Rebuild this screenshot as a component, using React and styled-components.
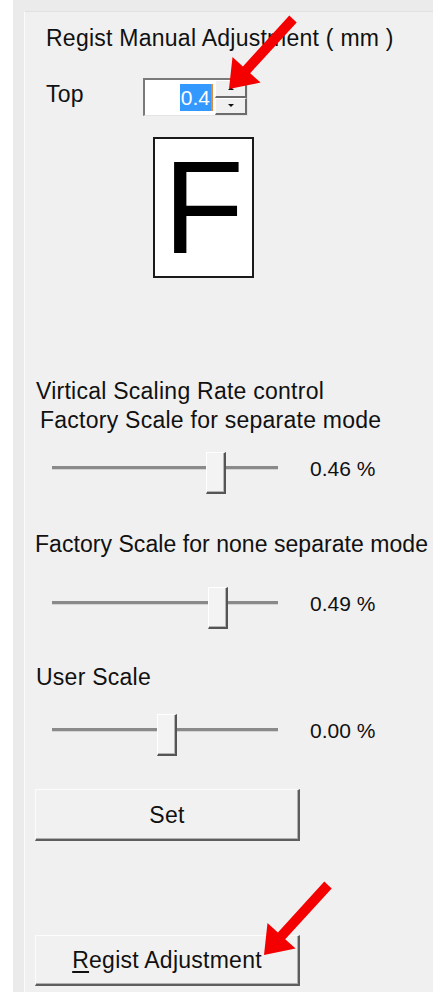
import React from "react";
import styled, { createGlobalStyle } from "styled-components";

const GlobalStyle = createGlobalStyle`
	html, body {
		margin: 0;
		padding: 0;
		background: #fff;
	}
	body {
		font-family: "Liberation Sans", Arial, sans-serif;
		color: #111;
	}
`;

const Page = styled.div`
	position: relative;
	display: flex;
	width: 433px;
	height: 992px;
	overflow: hidden;
	background: #fff;
`;

const Panel = styled.div`
	flex: 1;
	margin-left: 13px;
	padding: 11px 0 0 11px;
	background: #ebebeb;
	display: flex;
`;

const Frame = styled.div`
	flex: 1;
	display: flex;
	flex-direction: column;
	align-items: flex-start;
	background: #f0f0f0;
	border-left: 1px solid #fbfbfb;
	border-top: 1px solid #e1e1e1;
	padding: 13px 0 0 11px;
`;

const Label = styled.div`
	font-size: 23px;
	line-height: 26px;
	letter-spacing: ${p => (p.$spacing ?? 0.25)}px;
	white-space: nowrap;
	margin-top: ${p => p.$top || 0}px;
	margin-left: ${p => p.$left || 0}px;
`;

const TopRow = styled.div`
	display: flex;
	align-items: flex-start;
	margin: 27px 0 0 10px;
`;

const TopLabel = styled(Label)`
	width: 97px;
	margin-top: 3px;
`;

const Spin = styled.div`
	display: flex;
	height: 38px;
	border-top: 2px solid #7a7a7a;
	border-left: 2px solid #7a7a7a;
	border-bottom: 1px solid #e4e4e4;
	border-right: 1px solid #e4e4e4;
	box-sizing: border-box;
	background: #fff;
`;

const SpinInput = styled.div`
	width: 70px;
	display: flex;
	align-items: center;
	justify-content: flex-end;
	padding-right: 2px;
	box-sizing: border-box;
`;

const Selected = styled.span`
	background: #3399ff;
	color: #fff;
	font-size: 21px;
	line-height: 27px;
	padding: 0 1px;
	border-right: 2px solid #e08a3c;
`;

const SpinButtons = styled.div`
	display: flex;
	flex-direction: column;
	width: 32px;
`;

const SpinButton = styled.div`
	flex: 1;
	display: flex;
	align-items: center;
	justify-content: center;
	background: #f0f0f0;
	border-top: 1px solid #fff;
	border-left: 1px solid #fff;
	border-right: 2px solid #6c6c6c;
	border-bottom: 2px solid #6c6c6c;
	box-sizing: border-box;
	&::after {
		content: "";
		border-left: 3px solid transparent;
		border-right: 3px solid transparent;
		border-${p => (p.$up ? "bottom" : "top")}: 3px solid #111;
	}
`;

const LetterBox = styled.div`
	width: 101px;
	height: 141px;
	margin: 21px 0 0 117px;
	box-sizing: border-box;
	border: 2px solid #1a1a1a;
	background: #fff;
	display: flex;
	align-items: center;
	justify-content: center;
	font-size: 132px;
	line-height: 1;
	color: #000;
`;

const SliderRow = styled.div`
	display: flex;
	align-items: flex-start;
	height: 44px;
	margin-top: ${p => p.$top}px;
	margin-left: 16px;
`;

const Track = styled.div`
	position: relative;
	width: 226px;
	height: 44px;
	&::before {
		content: "";
		position: absolute;
		left: 0;
		right: 0;
		top: 14px;
		height: 3px;
		background: #8a8a8a;
		border-bottom: 1px solid #d4d4d4;
	}
`;

const Thumb = styled.div`
	position: absolute;
	top: 0;
	left: ${p => p.$left}px;
	width: 20px;
	height: 42px;
	box-sizing: border-box;
	background: #f3f3f3;
	border-top: 1px solid #fff;
	border-left: 1px solid #fff;
	border-right: 2px solid #555;
	border-bottom: 2px solid #555;
	box-shadow: inset -1px -1px 0 #b5b5b5;
`;

const Value = styled.div`
	margin: 4px 0 0 32px;
	font-size: 21px;
	line-height: 26px;
	white-space: nowrap;
`;

const Button = styled.div`
	width: 265px;
	height: ${p => p.$height}px;
	margin-top: ${p => p.$top}px;
	margin-left: -1px;
	box-sizing: border-box;
	display: flex;
	align-items: center;
	justify-content: center;
	background: #f1f1f1;
	border-top: 1px solid #fcfcfc;
	border-left: 1px solid #fcfcfc;
	border-right: 2px solid #5e5e5e;
	border-bottom: 2px solid #5e5e5e;
	box-shadow: inset -1px -1px 0 #b0b0b0;
	font-size: 23px;
	line-height: 26px;
	letter-spacing: 0.25px;
	white-space: nowrap;
	u {
		text-decoration-thickness: 2px;
		text-underline-offset: 3px;
	}
`;

const Overlay = styled.svg`
	position: absolute;
	left: 0;
	top: 0;
	pointer-events: none;
`;

const arrowPoints = (tx, ty, hx, hy, shaft = 5, headLen = 26, headHalf = 19) => {
	const dx = hx - tx;
	const dy = hy - ty;
	const len = Math.hypot(dx, dy);
	const ux = dx / len;
	const uy = dy / len;
	const nx = -uy;
	const ny = ux;
	const bx = hx - ux * headLen;
	const by = hy - uy * headLen;
	const pts = [
		[tx + nx * shaft, ty + ny * shaft],
		[bx + nx * shaft, by + ny * shaft],
		[bx + nx * headHalf, by + ny * headHalf],
		[hx, hy],
		[bx - nx * headHalf, by - ny * headHalf],
		[bx - nx * shaft, by - ny * shaft],
		[tx - nx * shaft, ty - ny * shaft],
	];
	return pts.map(p => p.map(v => v.toFixed(1)).join(",")).join(" ");
};

const sliders = [
	{ label: "Factory Scale for separate mode", labelLeft: 4, labelTop: 3, spacing: 0.25, rowTop: 19, thumb: 154, value: "0.46 %" },
	{ label: "Factory Scale for none separate mode", labelLeft: -1, labelTop: 35, spacing: 0.05, rowTop: 30, thumb: 156, value: "0.49 %" },
	{ label: "User Scale", labelLeft: 0, labelTop: 33, spacing: 0.25, rowTop: 24, thumb: 105, value: "0.00 %" },
];

const App = () => {
	return (
		<>
			<GlobalStyle />
			<Page>
				<Panel>
					<Frame>
						<Label $left={10}>Regist Manual Adjustment ( mm )</Label>
						<TopRow>
							<TopLabel>Top</TopLabel>
							<Spin>
								<SpinInput>
									<Selected>0.4</Selected>
								</SpinInput>
								<SpinButtons>
									<SpinButton $up />
									<SpinButton />
								</SpinButtons>
							</Spin>
						</TopRow>
						<LetterBox>F</LetterBox>

						<Label $top={100}>Virtical Scaling Rate control</Label>
						{sliders.map(s => (
							<React.Fragment key={s.label}>
								<Label $top={s.labelTop} $left={s.labelLeft} $spacing={s.spacing}>
									{s.label}
								</Label>
								<SliderRow $top={s.rowTop}>
									<Track>
										<Thumb $left={s.thumb} />
									</Track>
									<Value>{s.value}</Value>
								</SliderRow>
							</React.Fragment>
						))}

						<Button $top={31} $height={52}>
							Set
						</Button>
						<Button $top={94} $height={51}>
							<span>
								<u>R</u>egist Adjustment
							</span>
						</Button>
					</Frame>
				</Panel>
				<Overlay width="433" height="992">
					<polygon points={arrowPoints(293, 19, 229, 89)} fill="#f40000" />
					<polygon points={arrowPoints(328, 885, 264, 955)} fill="#f40000" />
				</Overlay>
			</Page>
		</>
	);
};

export default App;
